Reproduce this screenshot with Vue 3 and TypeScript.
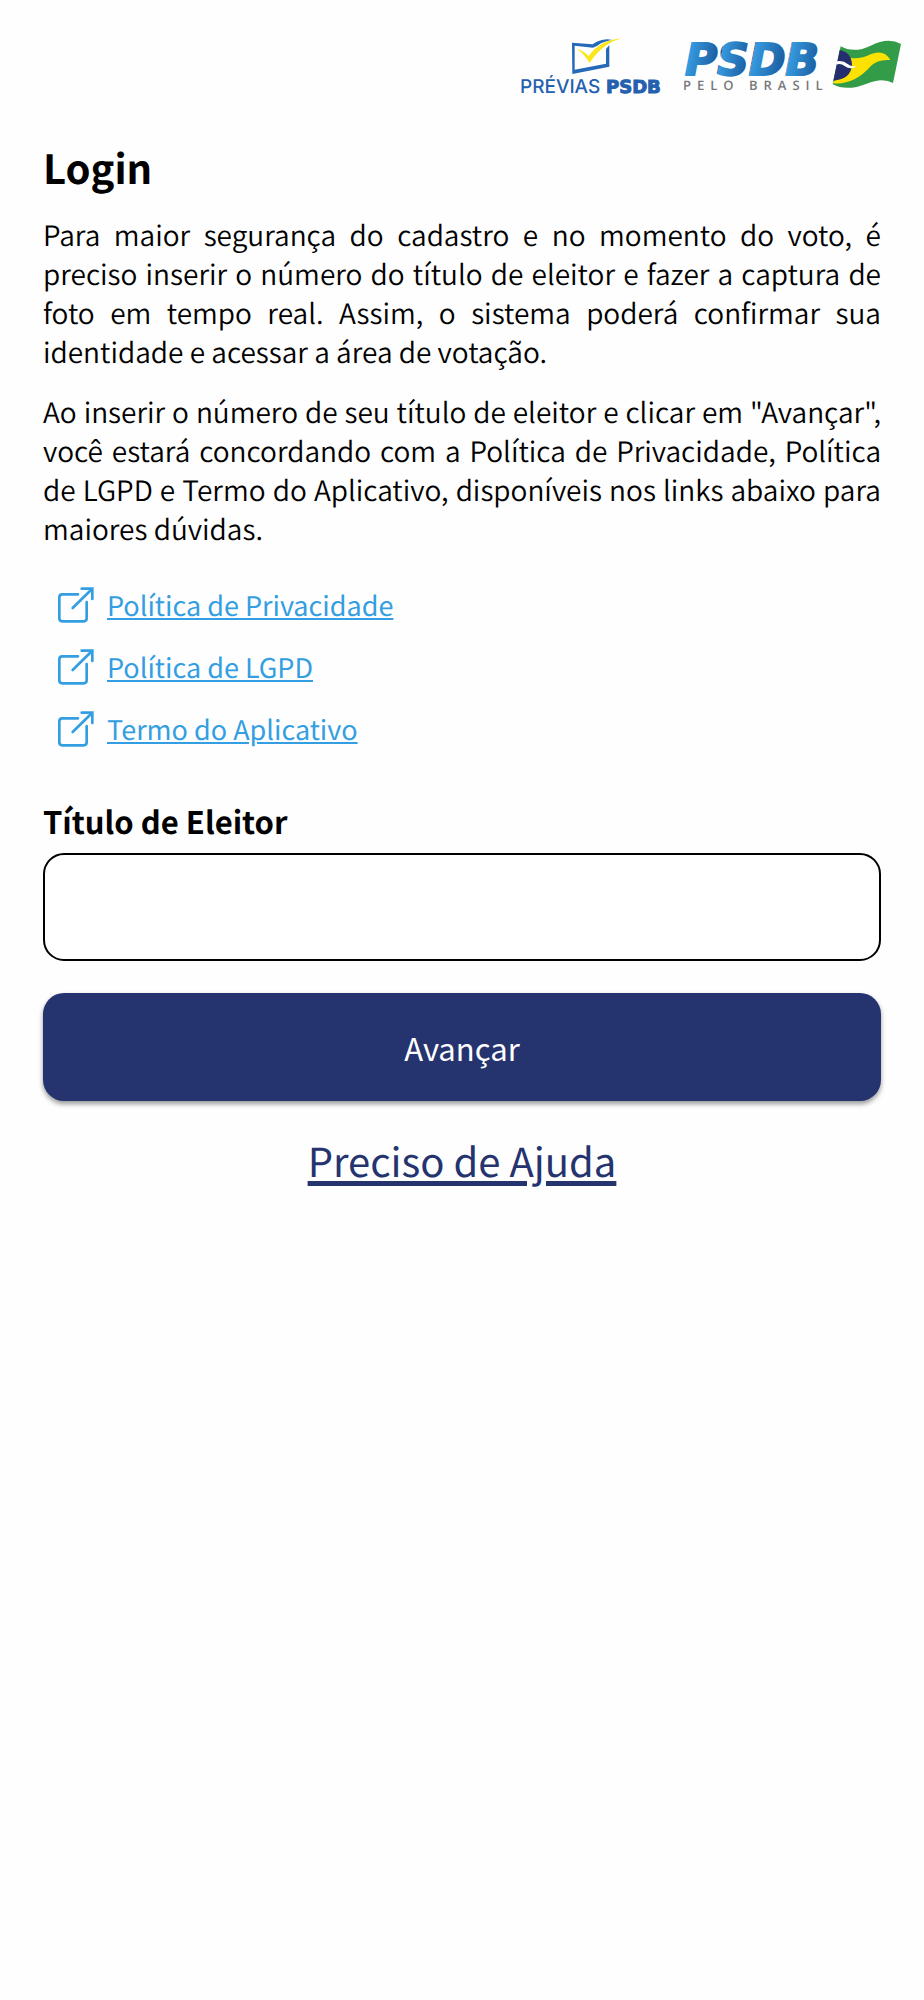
<script setup lang="ts">
import { ref } from 'vue'

interface PolicyLink {
  label: string
  href: string
}

const links: PolicyLink[] = [
  { label: 'Política de Privacidade', href: '#privacidade' },
  { label: 'Política de LGPD', href: '#lgpd' },
  { label: 'Termo do Aplicativo', href: '#termo' },
]

const voterId = ref('')
</script>

<template>
  <div class="page">
    <header class="brand">
      <svg class="logo-previas" viewBox="0 0 160 80" role="img" aria-label="Prévias PSDB">
        <g transform="scale(0.33333)">
          <path fill="#2468b8" fill-rule="evenodd" d="M186 53L248 58Q266 44 292 43L308 45Q280 48 262 62L249 68L194 62V134L288 116V72L298 60V125L187 147Z" />
          <path fill="#fbe51c" d="M200 71Q222 78 236 93Q270 45 336 40Q278 54 239 114Q222 86 200 71Z" />
        </g>
        <text class="previas-light" x="10" y="68">PRÉVIAS</text>
        <text class="previas-bold" x="96" y="68">PSDB</text>
      </svg>
      <svg class="logo-psdb" viewBox="0 0 254 80" role="img" aria-label="PSDB pelo Brasil">
        <defs>
          <!-- each letter fades from light to dark along the slant -->
          <linearGradient id="psdb-blue" gradientUnits="userSpaceOnUse" x1="15" y1="49" x2="144" y2="75">
            <stop offset="0" stop-color="#369be0" />
            <stop offset="0.24" stop-color="#1a5598" />
            <stop offset="0.24" stop-color="#369be0" />
            <stop offset="0.48" stop-color="#1a5598" />
            <stop offset="0.48" stop-color="#369be0" />
            <stop offset="0.75" stop-color="#1a5598" />
            <stop offset="0.75" stop-color="#369be0" />
            <stop offset="1" stop-color="#1a5598" />
          </linearGradient>
        </defs>
        <text class="psdb-name" x="15" y="50" fill="url(#psdb-blue)" stroke="url(#psdb-blue)">PSDB</text>
        <text class="psdb-tag" x="13" y="65">PELO BRASIL</text>
        <g transform="scale(0.33333)">
          <path fill="#339c48" d="M512 64Q552 86 602 62Q654 36 693 57L669 174Q638 156 590 176Q530 200 488 178Z" />
          <path fill="#fde100" d="M543 99Q572 103 602 88Q642 72 661 105Q622 102 602 124Q552 181 488 175Z" />
          <path fill="#262f6d" d="M509 75Q544 82 546 118Q544 163 490 167Z" />
          <path fill="#fff" d="M500 109Q518 104 534 118Q546 127 563 124Q541 136 525 124Q512 114 499 119Z" />
        </g>
      </svg>
    </header>

    <main class="content">
      <h1>Login</h1>
      <p>
        Para maior segurança do cadastro e no momento do voto, é preciso inserir o número do
        título de eleitor e fazer a captura de foto em tempo real. Assim, o sistema poderá
        confirmar sua identidade e acessar a área de votação.
      </p>
      <p>
        Ao inserir o número de seu título de eleitor e clicar em "Avançar", você estará
        concordando com a Política de Privacidade, Política de&nbsp;LGPD e Termo do Aplicativo,
        disponíveis nos links abaixo para maiores dúvidas.
      </p>

      <ul class="links">
        <li v-for="link in links" :key="link.href">
          <svg class="external" viewBox="54 50 108 108" aria-hidden="true">
            <path d="M114 72H67Q58 72 58 81V144Q58 153 67 153H131Q140 153 140 144V95" />
            <path d="M98 113L156 56M125 55H157V86" />
          </svg>
          <a :href="link.href">{{ link.label }}</a>
        </li>
      </ul>

      <form @submit.prevent>
        <label for="voter-id">Título de Eleitor</label>
        <input id="voter-id" v-model="voterId" type="text" inputmode="numeric" />
        <button type="submit">Avançar</button>
      </form>

      <a class="help" href="#ajuda">Preciso de Ajuda</a>
    </main>
  </div>
</template>

<style>
body {
  margin: 0;
  background: #fefefe;
}
</style>

<style scoped>
.page {
  font-family: "Noto Sans CJK SC", "Noto Sans", sans-serif;
  font-size: 28px;
  font-weight: 400;
  line-height: 39px;
  color: #000;
  text-rendering: geometricPrecision;
}

.brand {
  display: flex;
  justify-content: flex-end;
  padding-top: 25px;
}

.logo-previas {
  width: 160px;
  height: 80px;
}

.logo-psdb {
  width: 254px;
  height: 80px;
}

.previas-light {
  font-family: Inter, "Open Sans", sans-serif;
  font-size: 19px;
  font-weight: 500;
  fill: #2460ae;
}

.previas-bold {
  font-family: "DejaVu Sans", sans-serif;
  font-size: 18px;
  font-weight: 700;
  fill: #2460ae;
  stroke: #2460ae;
  stroke-width: 1px;
}

.psdb-name {
  font-family: "DejaVu Sans", sans-serif;
  font-size: 44px;
  font-weight: 700;
  font-style: italic;
  stroke-width: 2px;
}

.psdb-tag {
  font-family: "Open Sans", sans-serif;
  font-size: 13px;
  font-weight: 600;
  letter-spacing: 6px;
  fill: #77787b;
}

.content {
  display: flex;
  flex-direction: column;
  padding: 33px 43px 40px;
}

h1 {
  margin: 0 0 20px;
  font-size: 40px;
  font-weight: 700;
  line-height: 58px;
}

p {
  margin: 0 0 21px;
  font-weight: 350;
  text-align: justify;
}

.links {
  display: flex;
  flex-direction: column;
  gap: 23px;
  margin: 15px 0 51px;
  padding: 0 0 0 15px;
  font-size: 27px;
  list-style: none;
}

.links li {
  display: flex;
  align-items: center;
  gap: 13px;
}

.external {
  width: 36px;
  height: 36px;
  fill: none;
  stroke: #349ee2;
  stroke-width: 8;
  stroke-linecap: round;
}

.links a {
  color: #349ee2;
}

form {
  display: flex;
  flex-direction: column;
}

label {
  margin-bottom: 11px;
  font-size: 31px;
  font-weight: 700;
  line-height: 43px;
}

input {
  box-sizing: border-box;
  width: 100%;
  height: 108px;
  padding: 0 24px;
  border: 2px solid #000;
  border-radius: 21px;
  background: #fff;
  font: inherit;
}

button {
  height: 108px;
  margin-top: 32px;
  border: 0;
  border-radius: 21px;
  background: #25346e;
  box-shadow: 0 3px 5px rgba(0, 0, 0, 0.4);
  color: #fff;
  font: inherit;
  font-size: 31px;
}

.help {
  align-self: center;
  margin-top: 30px;
  color: #25346e;
  font-size: 40px;
  line-height: 58px;
  text-decoration: underline 5px;
  text-underline-offset: 4px;
}
</style>
